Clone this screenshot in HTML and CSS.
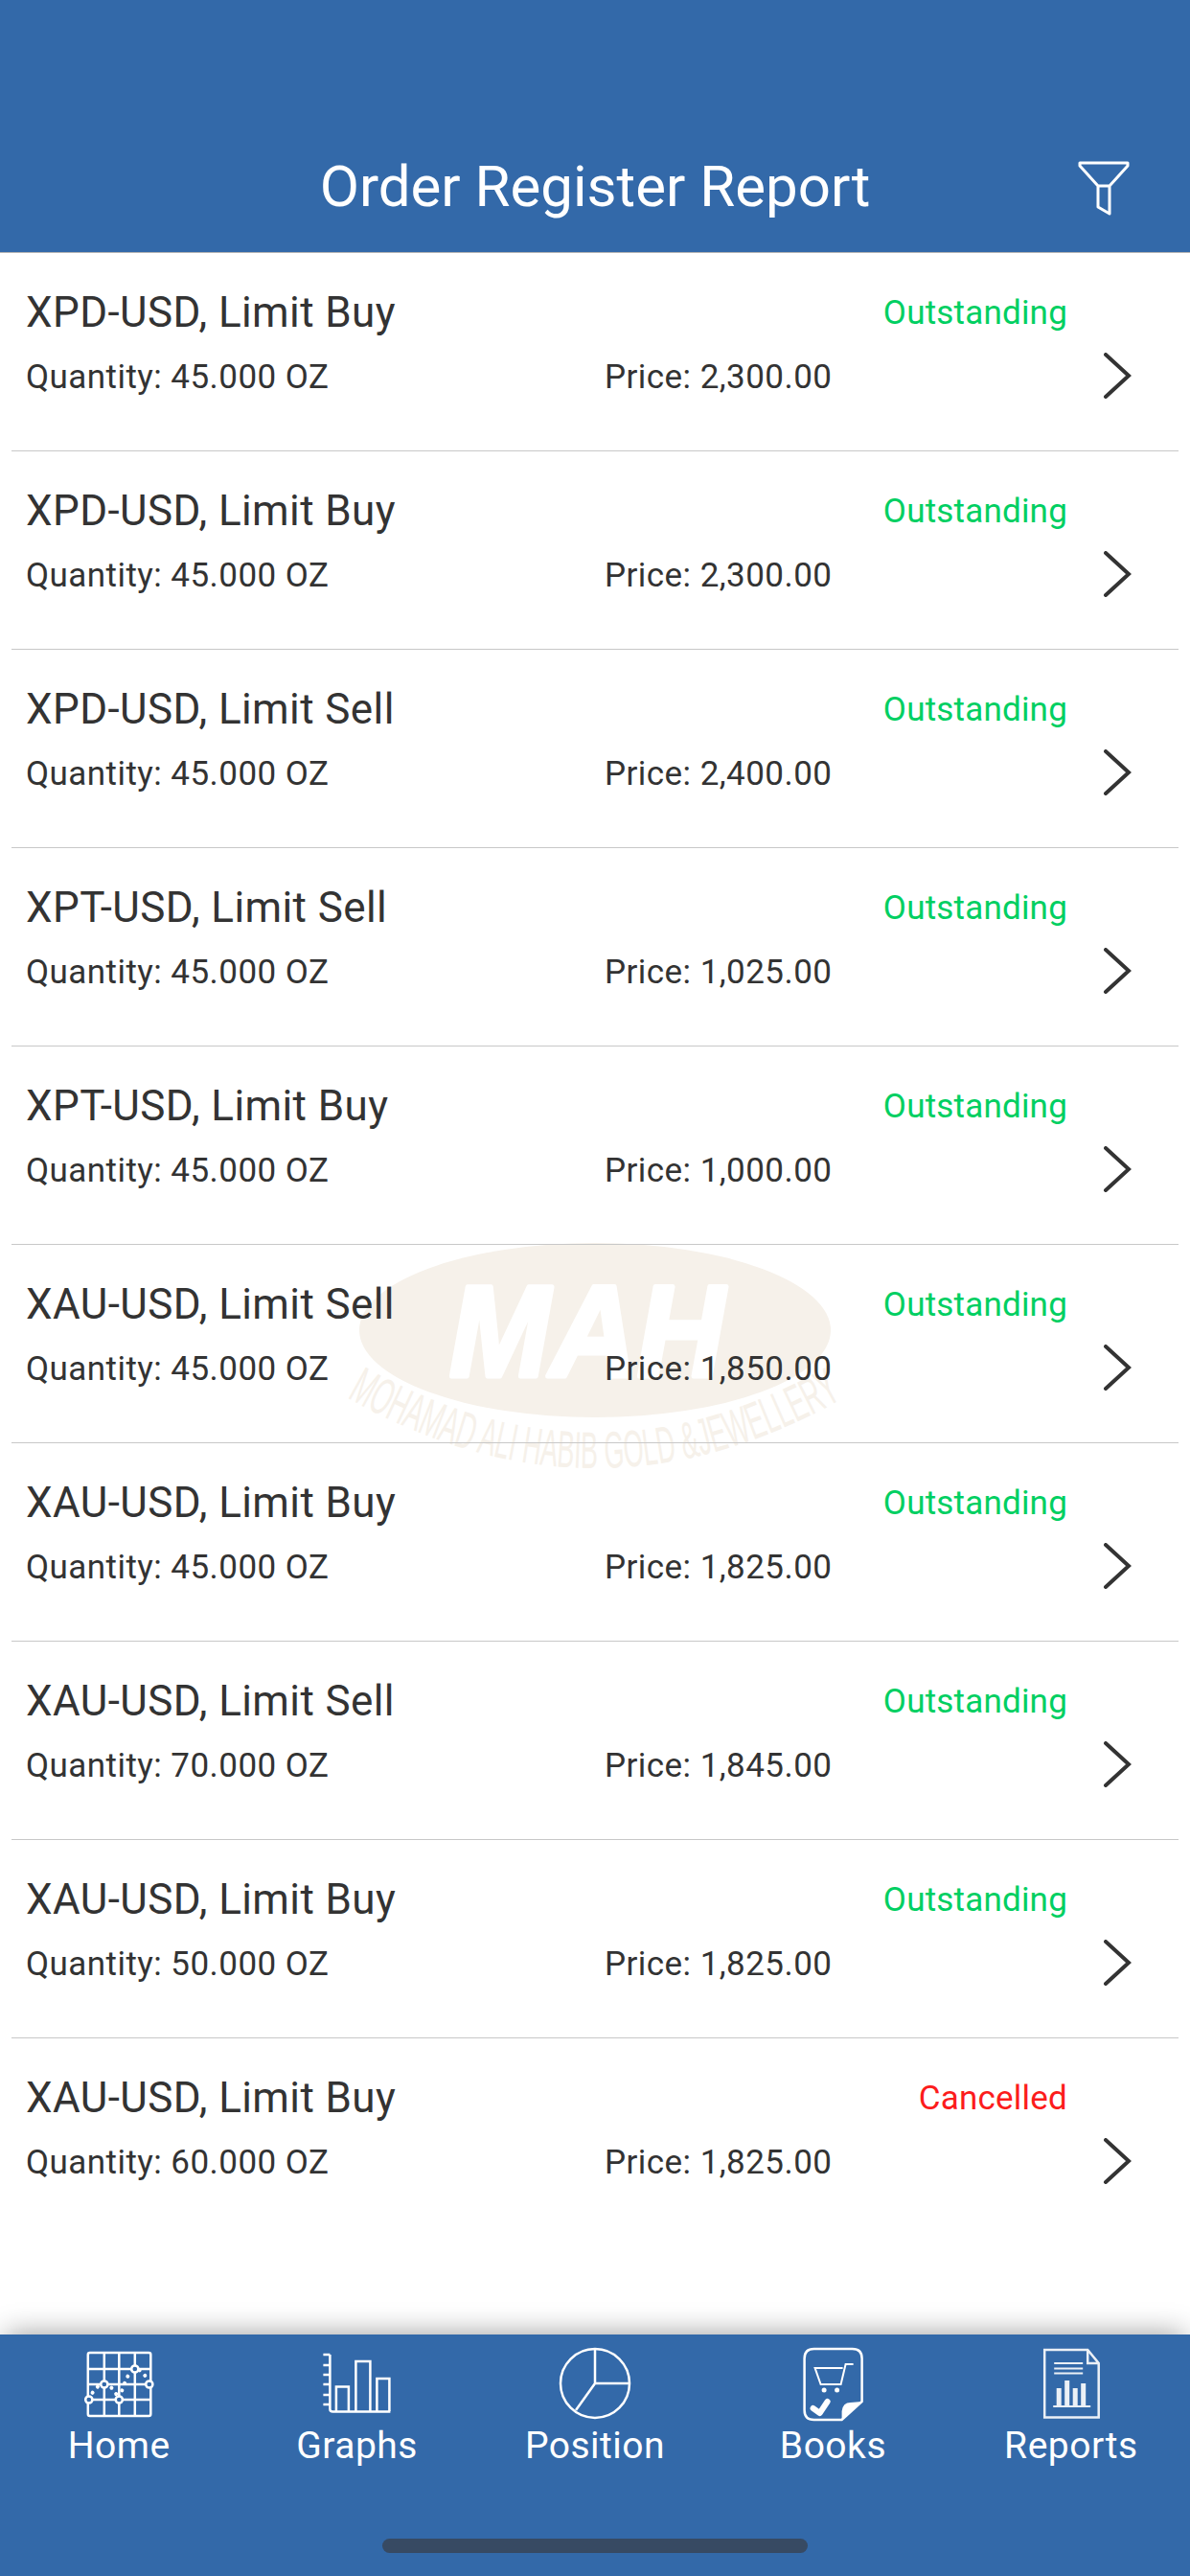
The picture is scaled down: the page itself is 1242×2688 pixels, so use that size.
FILE: index.html
```html
<!DOCTYPE html>
<html lang="en">
<head>
  <meta charset="UTF-8">
  <meta name="viewport" content="width=device-width, initial-scale=1.0">
  <title>Order Register Report</title>
  <link rel="stylesheet" href="styles.css">
</head>
<body>
  <header class="app-header">
    <h1 class="app-title">Order Register Report</h1>
    <svg class="filter-icon" viewBox="1122 165 60 62">
      <path d="M1127 170H1177V173L1158 194V223L1146 216V194L1127 173ZM1146 194H1158"/>
    </svg>
  </header>

  <main class="content">
    <!-- company watermark behind the rows -->
    <svg class="watermark" viewBox="360 1290 524 250">
      <ellipse class="wm-oval" cx="621" cy="1388" rx="246" ry="91"/>
      <text class="wm-logo" x="469" y="1436" textLength="287" lengthAdjust="spacingAndGlyphs">MAH</text>
      <path id="wm-arc" class="wm-arc" d="M362 1458Q621 1606 882 1458"/>
      <text class="wm-name"><textPath href="#wm-arc" textLength="544" lengthAdjust="spacingAndGlyphs">MOHAMAD ALI HABIB GOLD &amp;JEWELLERY</textPath></text>
    </svg>

    <ul class="order-list">
      <li class="order">
        <div class="order-name">XPD-USD, Limit Buy</div>
        <div class="order-status">Outstanding</div>
        <div class="order-qty">Quantity: 45.000 OZ</div>
        <div class="order-price">Price: 2,300.00</div>
        <svg class="chevron" viewBox="0 0 30 48"><path d="M3 2L27 24L3 46"/></svg>
      </li>
      <li class="order">
        <div class="order-name">XPD-USD, Limit Buy</div>
        <div class="order-status">Outstanding</div>
        <div class="order-qty">Quantity: 45.000 OZ</div>
        <div class="order-price">Price: 2,300.00</div>
        <svg class="chevron" viewBox="0 0 30 48"><path d="M3 2L27 24L3 46"/></svg>
      </li>
      <li class="order">
        <div class="order-name">XPD-USD, Limit Sell</div>
        <div class="order-status">Outstanding</div>
        <div class="order-qty">Quantity: 45.000 OZ</div>
        <div class="order-price">Price: 2,400.00</div>
        <svg class="chevron" viewBox="0 0 30 48"><path d="M3 2L27 24L3 46"/></svg>
      </li>
      <li class="order">
        <div class="order-name">XPT-USD, Limit Sell</div>
        <div class="order-status">Outstanding</div>
        <div class="order-qty">Quantity: 45.000 OZ</div>
        <div class="order-price">Price: 1,025.00</div>
        <svg class="chevron" viewBox="0 0 30 48"><path d="M3 2L27 24L3 46"/></svg>
      </li>
      <li class="order">
        <div class="order-name">XPT-USD, Limit Buy</div>
        <div class="order-status">Outstanding</div>
        <div class="order-qty">Quantity: 45.000 OZ</div>
        <div class="order-price">Price: 1,000.00</div>
        <svg class="chevron" viewBox="0 0 30 48"><path d="M3 2L27 24L3 46"/></svg>
      </li>
      <li class="order">
        <div class="order-name">XAU-USD, Limit Sell</div>
        <div class="order-status">Outstanding</div>
        <div class="order-qty">Quantity: 45.000 OZ</div>
        <div class="order-price">Price: 1,850.00</div>
        <svg class="chevron" viewBox="0 0 30 48"><path d="M3 2L27 24L3 46"/></svg>
      </li>
      <li class="order">
        <div class="order-name">XAU-USD, Limit Buy</div>
        <div class="order-status">Outstanding</div>
        <div class="order-qty">Quantity: 45.000 OZ</div>
        <div class="order-price">Price: 1,825.00</div>
        <svg class="chevron" viewBox="0 0 30 48"><path d="M3 2L27 24L3 46"/></svg>
      </li>
      <li class="order">
        <div class="order-name">XAU-USD, Limit Sell</div>
        <div class="order-status">Outstanding</div>
        <div class="order-qty">Quantity: 70.000 OZ</div>
        <div class="order-price">Price: 1,845.00</div>
        <svg class="chevron" viewBox="0 0 30 48"><path d="M3 2L27 24L3 46"/></svg>
      </li>
      <li class="order">
        <div class="order-name">XAU-USD, Limit Buy</div>
        <div class="order-status">Outstanding</div>
        <div class="order-qty">Quantity: 50.000 OZ</div>
        <div class="order-price">Price: 1,825.00</div>
        <svg class="chevron" viewBox="0 0 30 48"><path d="M3 2L27 24L3 46"/></svg>
      </li>
      <li class="order">
        <div class="order-name">XAU-USD, Limit Buy</div>
        <div class="order-status cancelled">Cancelled</div>
        <div class="order-qty">Quantity: 60.000 OZ</div>
        <div class="order-price">Price: 1,825.00</div>
        <svg class="chevron" viewBox="0 0 30 48"><path d="M3 2L27 24L3 46"/></svg>
      </li>
    </ul>
  </main>

  <footer class="tab-bar">
    <nav class="tabs">
      <a class="tab">
        <svg class="tab-icon" viewBox="84.2 2448 80 80">
          <rect x="92" y="2455" width="65.5" height="66" rx="2"/>
          <path d="M109 2455V2521M124.5 2455V2521M141 2455V2521M92 2472H157M92 2488H157M92 2504H157"/>
          <path class="dots" d="M93 2504Q100 2488 109 2488Q117 2488 124.5 2504Q134 2472 141 2472Q150 2472 156 2488"/>
          <circle cx="93" cy="2504" r="3.6"/><circle cx="109" cy="2488" r="3.6"/><circle cx="124.5" cy="2504" r="3.6"/>
          <circle cx="141" cy="2472" r="3.6"/><circle cx="156" cy="2488" r="3.6"/>
        </svg>
        <span class="tab-label">Home</span>
      </a>
      <a class="tab">
        <svg class="tab-icon" viewBox="332.6 2448 80 80">
          <path d="M344 2457V2514Q344 2516.5 347 2516.5H407"/>
          <path d="M337 2457H344M337 2468H344M337 2478H344M337 2488H344M337 2499H344M337 2509H344"/>
          <path d="M350.5 2516V2490.5H363.5V2516M371 2516V2464H386V2516M393 2516V2482H406V2516"/>
        </svg>
        <span class="tab-label">Graphs</span>
      </a>
      <a class="tab">
        <svg class="tab-icon" viewBox="581 2448 80 80">
          <circle cx="621" cy="2487" r="36"/>
          <path d="M621 2451V2487H657M621 2487L601 2515"/>
        </svg>
        <span class="tab-label">Position</span>
      </a>
      <a class="tab">
        <svg class="tab-icon" viewBox="829.4 2448 80 80">
          <path d="M850 2451H890Q900 2451 900 2461V2506L879 2525H850Q840 2525 840 2515V2461Q840 2451 850 2451Z"/>
          <path class="fill" d="M900 2506L879 2525V2516Q880 2507 888 2507Z"/>
          <path class="thin" d="M891 2467H883L878 2488H857L851 2471H880"/>
          <circle class="fill" cx="860.5" cy="2494" r="2.5"/><circle class="fill" cx="874" cy="2494" r="2.5"/>
          <path class="check" d="M849 2513L856 2518L864 2506"/>
        </svg>
        <span class="tab-label">Books</span>
      </a>
      <a class="tab">
        <svg class="tab-icon report" viewBox="1077.8 2448 80 80">
          <path d="M1090 2452H1135L1146.5 2466V2522.5H1090ZM1135 2452V2466H1146.5"/>
          <path class="thin" d="M1100 2466H1130M1100 2471.5H1130M1100 2476.5H1130M1099 2511H1138"/>
          <path class="fill" d="M1102.5 2511V2492H1107.5V2511ZM1111 2511V2484H1116V2511ZM1119.5 2511V2492H1124.5V2511ZM1128 2511V2487H1133V2511Z"/>
        </svg>
        <span class="tab-label">Reports</span>
      </a>
    </nav>
    <div class="home-bar"></div>
  </footer>
</body>
</html>
```

FILE: styles.css
```css
* {
  box-sizing: border-box;
}
body {
  display: flex;
  flex-direction: column;
  height: 2688px;
  margin: 0;
  background: #fff;
  font-family: Roboto, "Liberation Sans", sans-serif;
  color: #333;
  overflow: hidden;
}

/* Header */
.app-header {
  display: flex;
  justify-content: center;
  align-items: flex-start;
  position: relative;
  height: 264px;
  padding-top: 160px;
  background: #3369a9;
  border-bottom: 1px solid #b4b4b4;
}
.app-title {
  margin: 0;
  font-size: 60px;
  line-height: 70px;
  font-weight: 400;
  color: #fff;
}
.filter-icon {
  position: absolute;
  left: 1122px;
  top: 165px;
  width: 60px;
  height: 62px;
  fill: none;
  stroke: #fff;
  stroke-width: 3;
  stroke-linejoin: round;
}

/* List */
.content {
  flex: 1;
  position: relative;
}
.watermark {
  position: absolute;
  left: 360px;
  top: 1026px;
  width: 524px;
  height: 250px;
  overflow: visible;
}
.wm-oval {
  fill: #f6f1ea;
}
.wm-logo {
  font-family: "Liberation Sans", sans-serif;
  font-size: 136px;
  font-weight: 700;
  font-style: italic;
  fill: #fff;
  stroke: #fff;
  stroke-width: 5;
  stroke-linejoin: round;
}
.wm-arc {
  fill: none;
}
.wm-name {
  font-family: "Liberation Sans", sans-serif;
  font-size: 54px;
  fill: #f6f1ea;
}
.order-list {
  position: relative;
  margin: 0;
  padding: 0;
  list-style: none;
}
.order {
  display: grid;
  grid-template-columns: 604px 483px 1fr;
  grid-template-rows: 52px 65px;
  align-items: center;
  height: 207px;
  margin: 0 12px;
  padding: 36px 0 0 15px;
  border-bottom: 1px solid #c8c8c8;
}
.order:last-child {
  border-bottom: none;
}
.order-name {
  font-size: 44px;
  line-height: 52px;
  letter-spacing: 0.4px;
}
.order-status {
  grid-column: 2;
  font-size: 35px;
  text-align: right;
  letter-spacing: 0.2px;
  color: #00cf62;
}
.order-status.cancelled {
  color: #fc1c1c;
}
.order-qty,
.order-price {
  grid-row: 2;
  align-self: end;
  margin-bottom: 2px;
  font-size: 35px;
  line-height: 42px;
  letter-spacing: 0.45px;
}
.chevron {
  grid-row: 2;
  grid-column: 3;
  align-self: end;
  width: 30px;
  height: 48px;
  margin-left: 37px;
  margin-bottom: 1px;
  fill: none;
  stroke: #333;
  stroke-width: 4;
  stroke-linecap: round;
}

/* Bottom tabs */
.tab-bar {
  position: relative;
  height: 252px;
  background: #3369a9;
  box-shadow: 0 -6px 28px -6px rgba(0, 0, 0, 0.4);
}
.tabs {
  display: flex;
  padding-top: 12px;
}
.tab {
  flex: 1;
  display: flex;
  flex-direction: column;
  align-items: center;
  color: #fff;
}
.tab-icon {
  width: 80px;
  height: 80px;
  fill: none;
  stroke: #fff;
  stroke-width: 2.5;
}
.tab-icon circle {
  fill: #3369a9;
}
.tab-icon .dots {
  stroke-width: 4;
  stroke-linecap: round;
  stroke-dasharray: 0.1 8;
}
.tab-icon .thin {
  stroke-width: 2;
}
.tab-icon .fill,
.tab-icon circle.fill {
  fill: #fff;
  stroke: none;
}
.tab-icon .check {
  stroke-width: 6;
  stroke-linecap: round;
  stroke-linejoin: round;
}
.report {
  opacity: 0.9;
}
.tab-label {
  margin-top: 2px;
  font-size: 39px;
  line-height: 44px;
  letter-spacing: 0.5px;
}
.home-bar {
  position: absolute;
  left: 399px;
  bottom: 24px;
  width: 444px;
  height: 15px;
  border-radius: 8px;
  background: #374a63;
}
```
